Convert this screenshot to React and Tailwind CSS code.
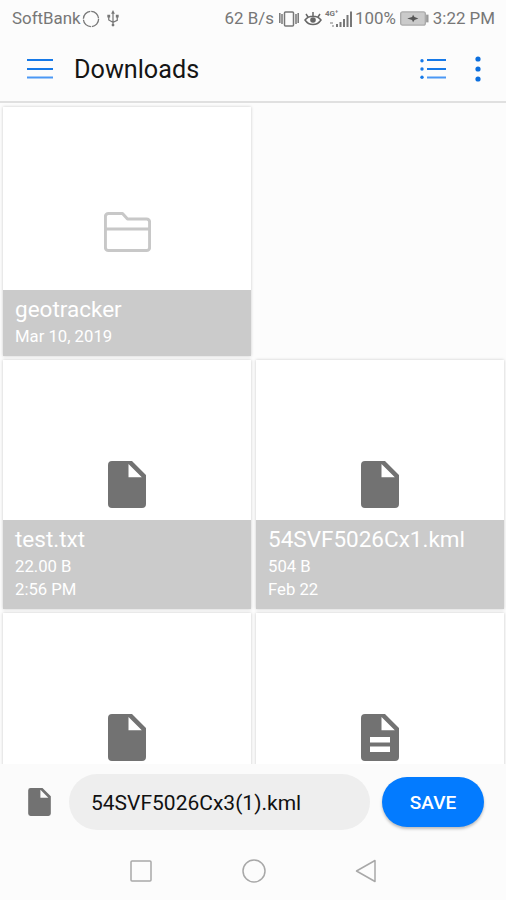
const files = [
  { name: 'geotracker', lines: ['Mar 10, 2019'], type: 'folder' },
  null,
  { name: 'test.txt', lines: ['22.00 B', '2:56 PM'], type: 'file' },
  { name: '54SVF5026Cx1.kml', lines: ['504 B', 'Feb 22'], type: 'file' },
  { name: '', lines: [], type: 'file' },
  { name: '', lines: [], type: 'doc' },
]

const FileIcon = ({ lined = false, className }) => (
  <svg viewBox="0 0 38 47" className={className}>
    <path
      fill="#727272"
      fillRule="evenodd"
      d="M4 0h20L38 14v29a4 4 0 0 1-4 4H4a4 4 0 0 1-4-4V4a4 4 0 0 1 4-4zM20.500 3v13.300h13.300z"
    />
    {lined && <path fill="#fff" d="M9 23h20v5.500H9zM9 32.500h20V38H9z" />}
  </svg>
)

const FolderIcon = () => (
  <svg viewBox="0 0 47 40" className="w-[47px] h-[40px]" fill="none" stroke="#c8c8c8" strokeWidth="3" strokeLinejoin="round">
    <path d="M4.400 1.500H18.500l5 5.500h19.100a3 3 0 0 1 3 3v25.500a3 3 0 0 1-3 3H4.400a3 3 0 0 1-3-3v-31a3 3 0 0 1 3-3z" />
    <path d="M1.500 17h44" />
  </svg>
)

const Tile = ({ file }) => (
  <div className="grid h-[249px] bg-white shadow-[0_0_3px_rgba(0,0,0,0.2)]">
    <div className="col-start-1 row-start-1 flex items-center justify-center">
      {file.type === 'folder' ? <FolderIcon /> : <FileIcon lined={file.type === 'doc'} className="w-[38px] h-[47px]" />}
    </div>
    {file.name && (
      <div className="col-start-1 row-start-1 self-end bg-[#cbcbcb] px-3 pt-1 pb-2 text-white">
        <p className="text-[22.500px] leading-[31px]">{file.name}</p>
        {file.lines.map((line) => (
          <p key={line} className="text-[16.700px] leading-[23px]">{line}</p>
        ))}
      </div>
    )}
  </div>
)

const StatusBar = () => (
  <div className="flex h-9 items-center pt-[1px] pl-3 pr-[11px] text-[16.900px] text-[#777]">
    <span>SoftBank</span>
    <svg viewBox="0 0 18 18" className="ml-[1px] h-[18px] w-[18px]" fill="none" stroke="#777" strokeWidth="1.300">
      <circle cx="9" cy="9" r="7.600" strokeDasharray="11 .94" />
    </svg>
    <svg viewBox="0 0 12 18" className="ml-[7px] h-[17px] w-3" fill="none" stroke="#777" strokeWidth="1.300">
      <path d="M6 3v13M1.500 7v3.500L6 13l4.500-2V7" />
      <path fill="#777" stroke="none" d="M6 0l2 4H4zM0 5h3v3H0zM9 5h3v3H9z" />
      <circle cx="6" cy="16" r="1.500" fill="#777" stroke="none" />
    </svg>
    <span className="ml-auto">62 B/s</span>
    <svg viewBox="0 0 20 18" className="ml-[5px] h-[18px] w-5" fill="none" stroke="#777" strokeWidth="1.500">
      <rect x="5.500" y="2" width="9" height="14" rx="1" />
      <path d="M3 4v10M17 4v10M.8 3v10M19.200 3v10" />
    </svg>
    <svg viewBox="0 0 18 16" className="ml-[5px] h-4 w-[18px]" fill="none" stroke="#666" strokeWidth="1.500">
      <path d="M1 9c4-5 12-5 16 0-4 6-12 6-16 0zM9 5V1M4 6L2 3M14 6l2-3" />
      <circle cx="9" cy="9" r="2.800" fill="#666" stroke="none" />
    </svg>
    <div className="ml-[3px] grid h-[18px] w-7">
      <span className="col-start-1 row-start-1 text-[8px] leading-[8px] font-bold">4G⁺</span>
      <svg viewBox="0 0 28 18" className="col-start-1 row-start-1 h-[18px] w-7" fill="#777">
        <path d="M11 14h2v3h-2zM14.500 12h2v5h-2zM18 9h2v8h-2zM21.500 5h2v12h-2zM25 1.500h2V17h-2z" />
        <path d="M5 12h3v2H5zM7 15h2v2H7z" opacity=".5" />
      </svg>
    </div>
    <span className="ml-[2px]">100%</span>
    <svg viewBox="0 0 30 15" className="ml-[4px] h-[15px] w-[29px]">
      <rect x=".7" y=".7" width="25.500" height="13.600" rx="2" fill="#cacaca" stroke="#aaa" strokeWidth="1.400" />
      <path fill="#999" d="M27 3.500h2.500v8H27z" />
      <path fill="#555" d="M7.500 7.500l5-1.500 1-2.500 1.500 2.500 4 1.500-4 1.500-1.500 2.500-1-2.500z" />
    </svg>
    <span className="ml-[4px]">3:22 PM</span>
  </div>
)

const AppBar = () => (
  <header className="flex h-[67px] items-center border-b-2 border-[#e0e0e0] pt-[1px] pl-[27px] pr-[25px]">
    <svg viewBox="0 0 26 20" className="h-5 w-[26px]" stroke="#1679e8" strokeWidth="2">
      <path d="M0 1h26M0 10h26" />
      <path d="M0 18.500h26" stroke="#4b98f5" />
    </svg>
    <h1 className="ml-[21px] pt-[2px] text-[25.200px] leading-none text-[#151515]">Downloads</h1>
    <svg viewBox="0 0 26 20" className="ml-auto h-5 w-[26px]" stroke="#1679e8" strokeWidth="2">
      <path d="M7 1h19M7 10h19" />
      <path d="M7 18.500h19" stroke="#4b98f5" />
      <g fill="#1679e8" stroke="none">
        <circle cx="2" cy="1.700" r="1.700" />
        <circle cx="2" cy="10" r="1.700" />
        <circle cx="2" cy="18.200" r="1.700" />
      </g>
    </svg>
    <svg viewBox="0 0 6 26" className="ml-[29px] h-[26px] w-[6px]" fill="#0c6fde">
      <circle cx="3" cy="3" r="2.600" />
      <circle cx="3" cy="13" r="2.600" />
      <circle cx="3" cy="23" r="2.600" />
    </svg>
  </header>
)

const App = () => {
  return (
    <div className="flex h-[900px] w-[506px] flex-col overflow-hidden bg-[#fcfcfc] font-['Roboto','Liberation_Sans',sans-serif]">
      <StatusBar />
      <AppBar />

      {/* File grid */}
      <main className="h-[661px] overflow-hidden pt-1 pl-[3px] pr-[2px]">
        <div className="grid grid-cols-2 gap-x-[5px] gap-y-1">
          {files.map((file, i) => (file ? <Tile key={i} file={file} /> : <div key={i} />))}
        </div>
      </main>

      {/* Save bar */}
      <div className="flex h-[76px] items-center bg-[#fbfbfb] pl-[28px] pr-[22px]">
        <FileIcon className="h-[28px] w-[23px]" />
        <div className="ml-[18px] flex h-[56px] w-[301px] items-center rounded-full bg-[#eee] pt-[3px] pl-[22px] text-[21px] text-[#111]">
          54SVF5026Cx3(1).kml
        </div>
        <button className="ml-3 h-[50px] w-[102px] rounded-full bg-[#037bff] pt-[2px] text-[19px] font-medium text-white shadow-[0_2px_3px_rgba(0,0,0,0.25)]">
          SAVE
        </button>
      </div>

      {/* System navigation */}
      <nav className="flex flex-1 items-center justify-center gap-[89px] pt-[2px] pl-[1px]">
        <svg viewBox="0 0 24 24" className="h-6 w-6" fill="none" stroke="#a8a8a8" strokeWidth="1.500">
          <rect x="2" y="2" width="20" height="20" rx="1" />
        </svg>
        <svg viewBox="0 0 24 24" className="h-6 w-6" fill="none" stroke="#a8a8a8" strokeWidth="1.500">
          <circle cx="12" cy="12" r="11" />
        </svg>
        <svg viewBox="0 0 24 24" className="h-6 w-6" fill="none" stroke="#a8a8a8" strokeWidth="1.500" strokeLinejoin="round">
          <path d="M1.500 12L20 1.500v21z" />
        </svg>
      </nav>
    </div>
  )
}

export default App
